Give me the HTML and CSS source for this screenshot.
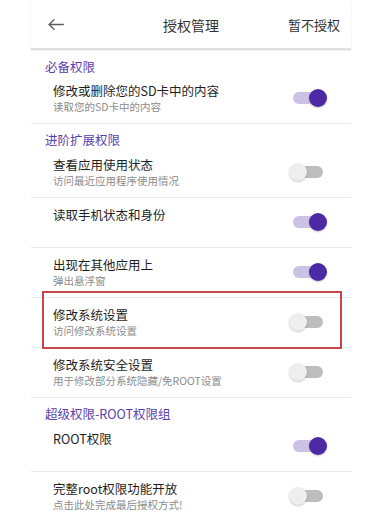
FILE: index.html
```html
<!DOCTYPE html>
<html lang="zh-CN">
<head>
<meta charset="utf-8">
<title>授权管理</title>
<link rel="stylesheet" href="styles.css">
</head>
<body>
<div class="screen">
  <header class="topbar">
    <span class="back">
      <svg width="16" height="11" viewBox="0 0 16 11" fill="none" stroke="#5a5a5a" stroke-width="1.3" stroke-linecap="round" stroke-linejoin="round"><path d="M15.3 5.5H1M6 0.8L1 5.5L6 10.2"/></svg>
    </span>
    <span class="title">授权管理</span>
    <span class="action">暂不授权</span>
  </header>

  <div class="section first">必备权限</div>
  <div class="row">
    <div class="text"><div class="name">修改或删除您的SD卡中的内容</div><div class="desc">读取您的SD卡中的内容</div></div>
    <span class="switch on"></span>
  </div>

  <div class="section">进阶扩展权限</div>
  <div class="row">
    <div class="text"><div class="name">查看应用使用状态</div><div class="desc">访问最近应用程序使用情况</div></div>
    <span class="switch"></span>
  </div>
  <div class="row">
    <div class="text"><div class="name">读取手机状态和身份</div></div>
    <span class="switch on"></span>
  </div>
  <div class="row">
    <div class="text"><div class="name">出现在其他应用上</div><div class="desc">弹出悬浮窗</div></div>
    <span class="switch on"></span>
  </div>
  <div class="row marked">
    <div class="text"><div class="name">修改系统设置</div><div class="desc">访问修改系统设置</div></div>
    <span class="switch"></span>
    <span class="highlight"></span>
  </div>
  <div class="row">
    <div class="text"><div class="name">修改系统安全设置</div><div class="desc">用于修改部分系统隐藏/免ROOT设置</div></div>
    <span class="switch"></span>
  </div>

  <div class="section">超级权限-ROOT权限组</div>
  <div class="row">
    <div class="text"><div class="name">ROOT权限</div></div>
    <span class="switch on"></span>
  </div>
  <div class="row">
    <div class="text"><div class="name">完整root权限功能开放</div><div class="desc">点击此处完成最后授权方式!</div></div>
    <span class="switch"></span>
  </div>
</div>
</body>
</html>
```

FILE: styles.css
```css
* { box-sizing: border-box; }
html, body { margin: 0; padding: 0; background: #fff; }
body {
  font-family: "Noto Sans CJK SC", "Noto Sans", Roboto, sans-serif;
  color: #222;
  overflow: hidden;
  height: 512px;
}
.screen {
  width: 320px;
  margin-left: 31px;
}
.topbar {
  height: 49px;
  display: grid;
  grid-template-columns: 1fr auto 1fr;
  align-items: center;
  box-shadow: 0 1px 1px rgba(0,0,0,0.10), 0 2px 2px rgba(0,0,0,0.05);
  border-bottom: 1px solid #e2e2e2;
}
.back {
  justify-self: start;
  padding-left: 17px;
  display: flex;
  padding-top: 1px;
}
.title {
  font-size: 14px;
  color: #333;
  line-height: 20px;
  padding-top: 2px;
}
.action {
  justify-self: end;
  padding-right: 11px;
  font-size: 13px;
  color: #333;
  line-height: 20px;
  padding-top: 1px;
}
.section {
  height: 24px;
  padding: 8px 0 0 14px;
  font-size: 12.5px;
  line-height: 16px;
  color: #5a3eab;
}
.section.first {
  height: 25px;
  padding-top: 10px;
}
.row {
  position: relative;
  height: 50px;
  display: flex;
  justify-content: space-between;
  border-bottom: 1px solid #e8e8e8;
  padding: 9px 24px 0 22px;
}
.name {
  font-size: 12.5px;
  line-height: 16px;
  color: #1e1e1e;
}
.desc {
  margin-top: 1px;
  font-size: 10.5px;
  line-height: 13px;
  color: #8c8c8c;
}
.switch {
  position: relative;
  flex: none;
  width: 38px;
  height: 18px;
  margin-top: 6px;
}
.switch::before {
  content: "";
  position: absolute;
  left: 4px;
  right: 4px;
  top: 3px;
  height: 12px;
  border-radius: 6px;
  background: #bdbdbd;
}
.switch::after {
  content: "";
  position: absolute;
  left: 0;
  top: 0;
  width: 18px;
  height: 18px;
  border-radius: 50%;
  background: #eeeeee;
  box-shadow: 0 1px 2px rgba(0,0,0,0.22);
}
.switch.on::before { background: #cbc2e6; }
.switch.on::after {
  left: auto;
  right: 0;
  background: #4c2aa3;
}
.highlight {
  position: absolute;
  top: -7px;
  left: 11px;
  right: 9px;
  bottom: -2px;
  border: 2px solid #c9474a;
}
```
